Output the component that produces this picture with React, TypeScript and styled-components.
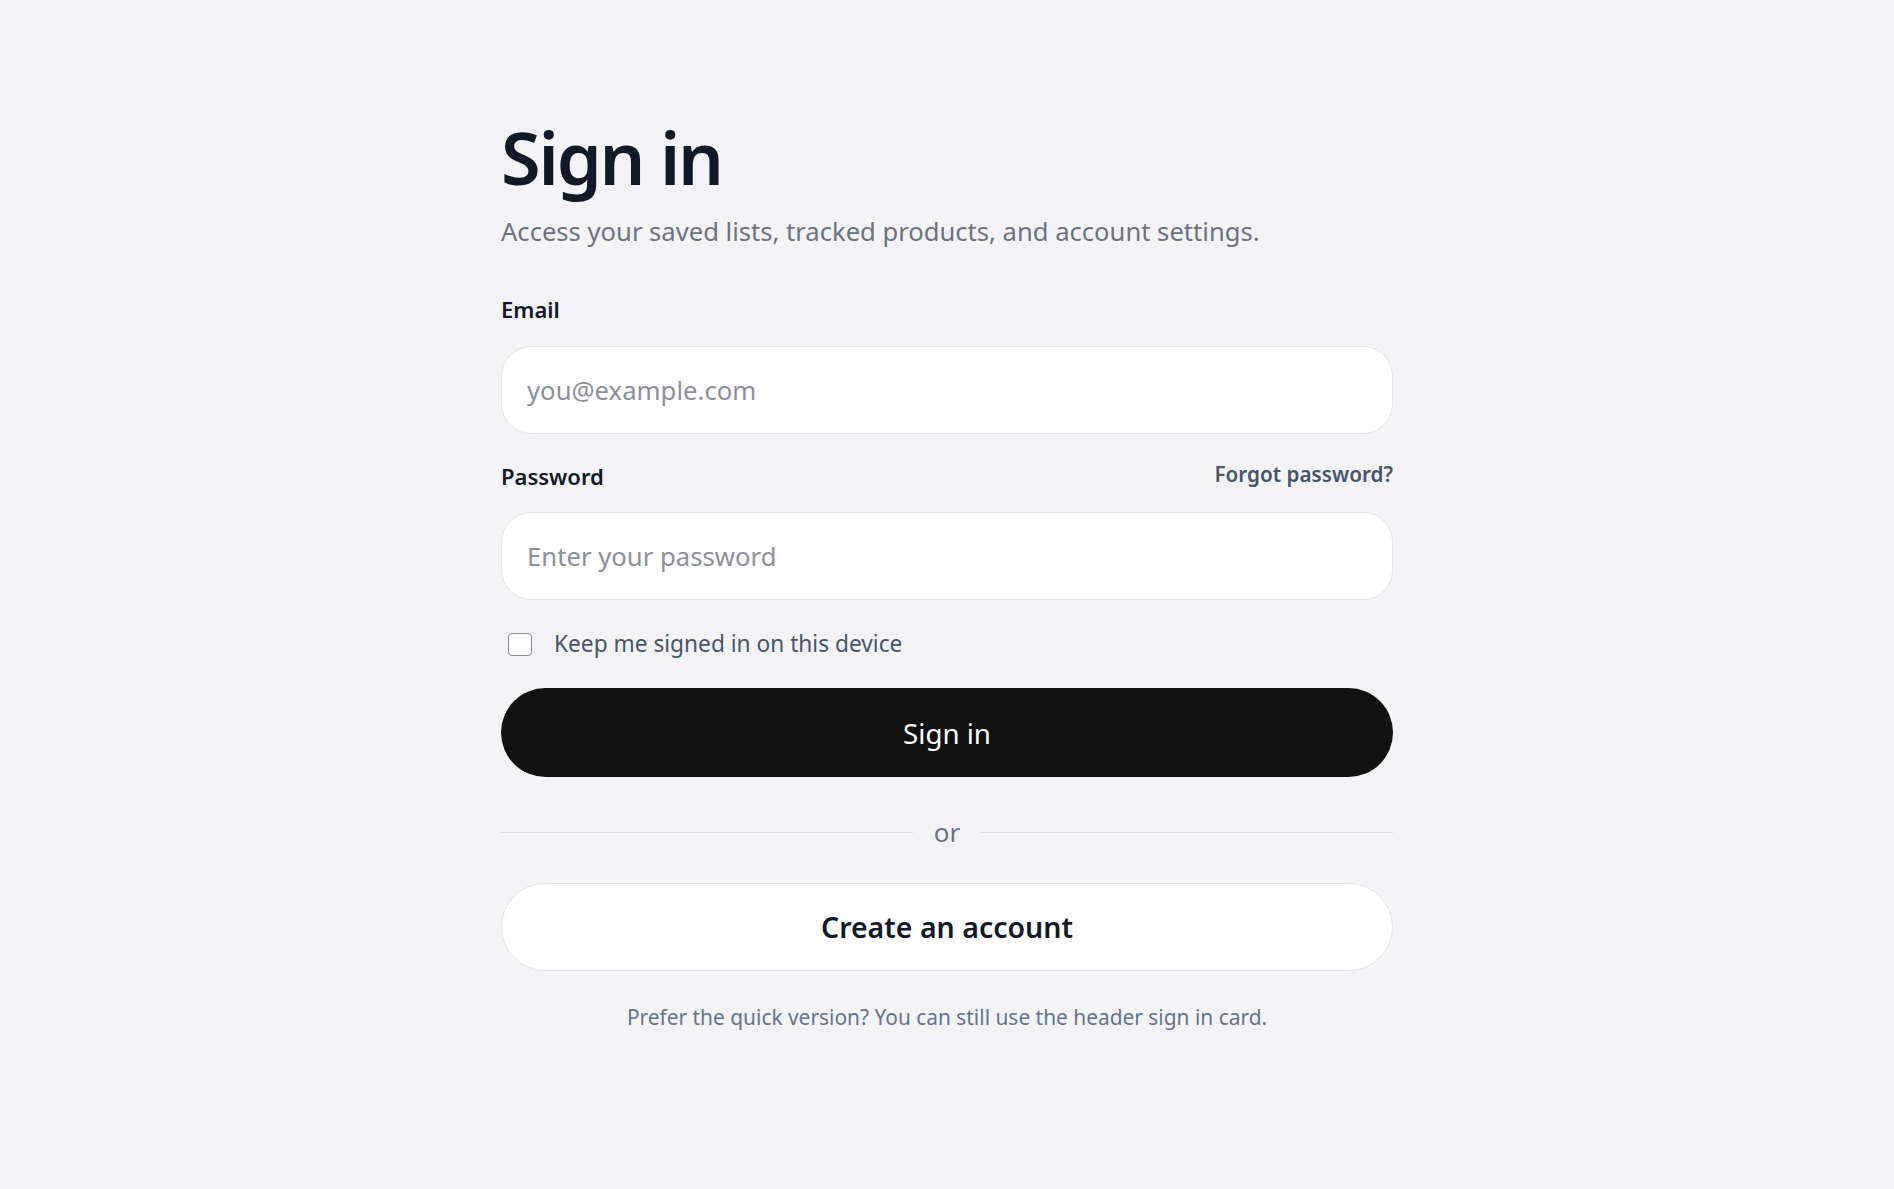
import React from "react";
import styled, { createGlobalStyle } from "styled-components";

const GlobalStyle = createGlobalStyle`
  html, body {
    margin: 0;
    padding: 0;
    background: #f4f4f6;
  }
  body {
    font-family: "Noto Sans", "Open Sans", sans-serif;
    color: #111827;
  }
  * { box-sizing: border-box; }
`;

const Page = styled.main`
  min-height: 100vh;
  background: #f4f4f6;
  padding-top: 114px;
`;

const Container = styled.section`
  width: 892px;
  margin: 0 auto;
  display: flex;
  flex-direction: column;
`;

const Title = styled.h1`
  margin: 0;
  font-size: 72px;
  line-height: 1.2;
  font-weight: 600;
  letter-spacing: -0.03em;
  color: #111827;
`;

const Subtitle = styled.p`
  margin: 14px 0 0;
  font-size: 25.6px;
  line-height: 36px;
  color: #6b7280;
`;

const Form = styled.form`
  display: flex;
  flex-direction: column;
  margin-top: 44px;
`;

const FieldRow = styled.div<{ $top?: number }>`
  display: flex;
  align-items: center;
  justify-content: space-between;
  margin-top: ${(p) => p.$top ?? 0}px;
`;

const Label = styled.label`
  font-size: 22px;
  line-height: 1.4;
  font-weight: 600;
  color: #111827;
`;

const ForgotLink = styled.a`
  margin-bottom: 4px;
  font-size: 20.7px;
  line-height: 28px;
  font-weight: 600;
  color: #475569;
  text-decoration: none;
`;

const Input = styled.input<{ $top?: number }>`
  margin-top: ${(p) => p.$top ?? 21}px;
  width: 100%;
  height: 88px;
  padding: 0 25px;
  border: 1px solid #e3e4e8;
  border-radius: 30px;
  background: #ffffff;
  font-family: "Noto Sans", sans-serif;
  font-size: 25.7px;
  color: #111827;
  outline: none;
  &::placeholder {
    color: #8b909a;
  }
`;

const CheckRow = styled.label`
  display: flex;
  align-items: center;
  gap: 22px;
  margin-top: 27px;
  font-size: 22.7px;
  line-height: 34px;
  color: #475569;
  cursor: pointer;
`;

const Checkbox = styled.input`
  appearance: none;
  margin: 0 0 0 7px;
  width: 24px;
  height: 23px;
  border: 1.5px solid #8a8c96;
  border-radius: 4px;
  background: #ffffff;
  flex-shrink: 0;
`;

const PrimaryButton = styled.button`
  margin-top: 27px;
  width: 100%;
  height: 89px;
  border: none;
  border-radius: 999px;
  background: #111111;
  color: #ffffff;
  font-family: "Noto Sans", sans-serif;
  font-size: 27.7px;
  cursor: pointer;
`;

const Divider = styled.div`
  display: flex;
  align-items: center;
  gap: 21px;
  margin-top: 37px;
  font-size: 26px;
  line-height: 1.4;
  color: #64748b;
`;

const Line = styled.span`
  flex: 1;
  height: 1px;
  background: #dcdde2;
`;

const SecondaryButton = styled.a`
  margin-top: 32px;
  display: flex;
  align-items: center;
  justify-content: center;
  width: 100%;
  height: 88px;
  border: 1px solid #e3e4e8;
  border-radius: 999px;
  background: #ffffff;
  color: #111827;
  font-size: 28.5px;
  font-weight: 600;
  text-decoration: none;
`;

const Footnote = styled.p`
  margin: 31px 0 0;
  text-align: center;
  font-size: 20.9px;
  line-height: 30px;
  color: #64748b;
`;

export default function App() {
  return (
    <>
      <GlobalStyle />
      <Page>
        <Container>
          <Title>Sign in</Title>
          <Subtitle>Access your saved lists, tracked products, and account settings.</Subtitle>
          <Form onSubmit={(e) => e.preventDefault()}>
            <FieldRow>
              <Label htmlFor="email">Email</Label>
            </FieldRow>
            <Input id="email" type="email" placeholder="you@example.com" />
            <FieldRow $top={26}>
              <Label htmlFor="password">Password</Label>
              <ForgotLink href="#">Forgot password?</ForgotLink>
            </FieldRow>
            <Input id="password" type="password" placeholder="Enter your password" $top={20} />
            <CheckRow>
              <Checkbox type="checkbox" />
              <span>Keep me signed in on this device</span>
            </CheckRow>
            <PrimaryButton type="submit">Sign in</PrimaryButton>
            <Divider>
              <Line />
              <span>or</span>
              <Line />
            </Divider>
            <SecondaryButton href="#">Create an account</SecondaryButton>
            <Footnote>Prefer the quick version? You can still use the header sign in card.</Footnote>
          </Form>
        </Container>
      </Page>
    </>
  );
}
